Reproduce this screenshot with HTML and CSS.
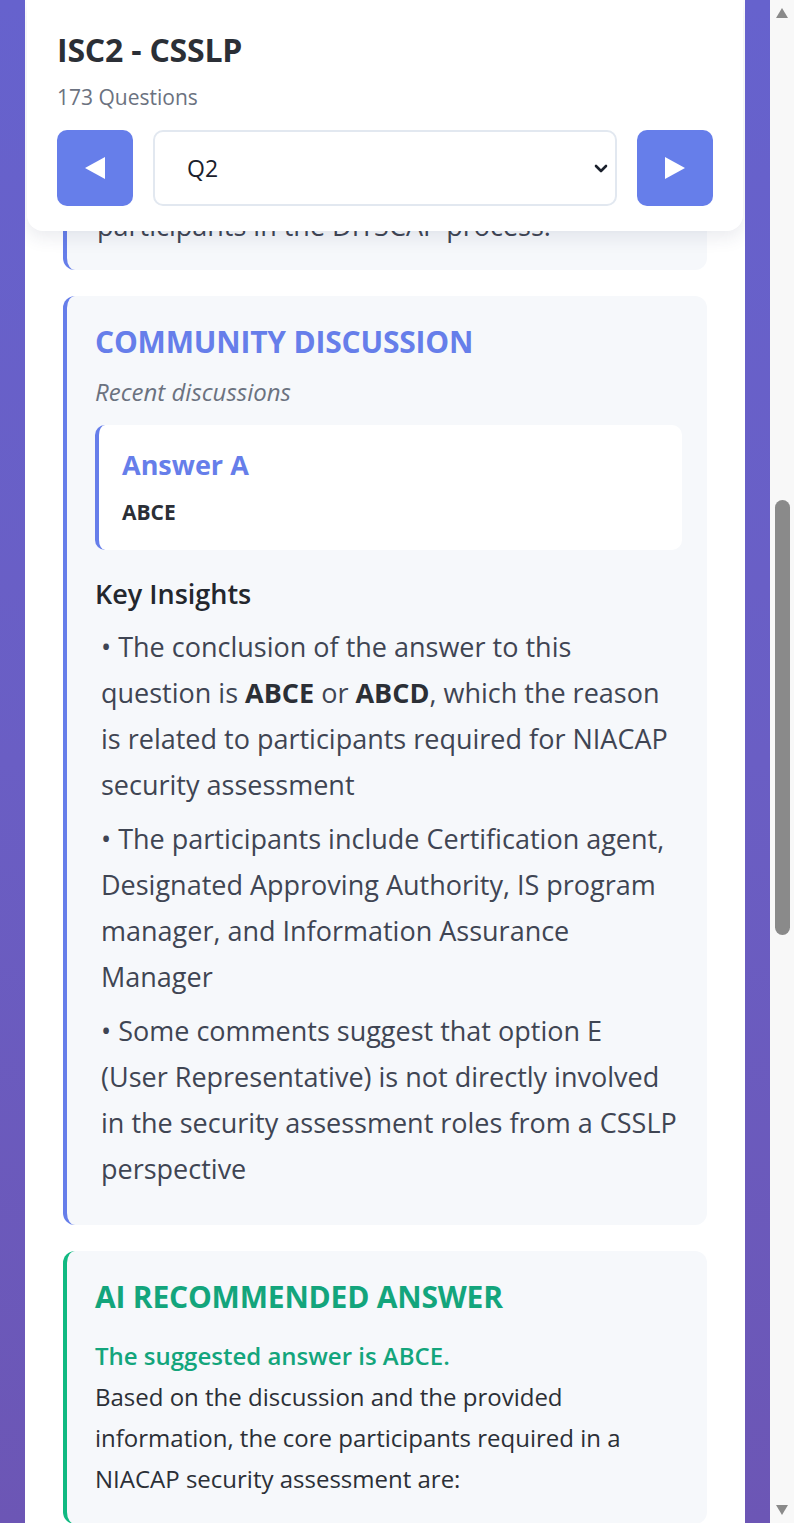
FILE: index.html
```html
<!DOCTYPE html>
<html lang="en">
<head>
<meta charset="utf-8">
<title>ISC2 - CSSLP</title>
<link rel="stylesheet" href="styles.css">
</head>
<body>
<div class="page">
  <div class="container">
    <header class="topbar">
      <h1 class="exam-title">ISC2 - CSSLP</h1>
      <div class="exam-count">173 Questions</div>
      <nav class="nav-row">
        <button class="nav-btn" aria-label="Previous question">
          <svg width="24" height="24" viewBox="0 0 24 24"><polygon points="22,1 22,23 2,12" fill="#fff"/></svg>
        </button>
        <div class="select-wrap">
          <select class="q-select">
            <option>Q2</option>
          </select>
          <svg class="chevron" width="14" height="9" viewBox="0 0 14 9"><polyline points="2,2 7,7 12,2" fill="none" stroke="#1a202c" stroke-width="2.6" stroke-linecap="round" stroke-linejoin="round"/></svg>
        </div>
        <button class="nav-btn" aria-label="Next question">
          <svg width="24" height="24" viewBox="0 0 24 24"><polygon points="2,1 2,23 22,12" fill="#fff"/></svg>
        </button>
      </nav>
    </header>

    <main class="content">
      <section class="card card-prev">
        <p class="prev-text">participants in the DITSCAP process.</p>
      </section>

      <section class="card">
        <h2 class="sec-title">COMMUNITY DISCUSSION</h2>
        <div class="sec-sub">Recent discussions</div>
        <div class="answer-box">
          <div class="answer-label">Answer A</div>
          <div class="answer-value">ABCE</div>
        </div>
        <h3 class="insights-title">Key Insights</h3>
        <div class="insights">
          <p>• The conclusion of the answer to this<br>question is <strong>ABCE</strong> or <strong>ABCD</strong>, which the reason<br>is related to participants required for NIACAP<br>security assessment</p>
          <p>• The participants include Certification agent,<br>Designated Approving Authority, IS program<br>manager, and Information Assurance<br>Manager</p>
          <p>• Some comments suggest that option E<br>(User Representative) is not directly involved<br>in the security assessment roles from a CSSLP<br>perspective</p>
        </div>
      </section>

      <section class="card card-ai">
        <h2 class="sec-title sec-title-ai">AI RECOMMENDED ANSWER</h2>
        <p class="ai-text"><span class="ai-answer">The suggested answer is ABCE.</span><br>Based on the discussion and the provided<br>information, the core participants required in a<br>NIACAP security assessment are:</p>
      </section>
    </main>
  </div>
</div>
<div class="scrollbar">
  <div class="sb-arrow sb-up"></div>
  <div class="sb-track"><div class="sb-thumb"></div></div>
  <div class="sb-arrow sb-down"></div>
</div>
</body>
</html>
```
FILE: styles.css
```css
* { box-sizing: border-box; }

html, body {
  margin: 0;
  padding: 0;
  height: 1523px;
  overflow: hidden;
}

body {
  display: flex;
  font-family: "Open Sans", "Noto Sans", "DejaVu Sans", sans-serif;
  color: #3f4553;
}

.page {
  flex: 1;
  height: 1523px;
  padding: 0 25px;
  background: linear-gradient(180deg, #6662cd 0%, #6a5ec4 50%, #6c56b5 100%);
}

.container {
  position: relative;
  height: 100%;
  background: #ffffff;
  overflow: hidden;
}

/* sticky header overlaying the scrolled content */
.topbar {
  position: absolute;
  top: 0;
  left: 2px;
  right: 2px;
  z-index: 5;
  background: #ffffff;
  border-radius: 0 0 16px 16px;
  box-shadow: 0 6px 18px rgba(40, 50, 90, 0.10);
  padding: 32px 30px 25px;
}

.exam-title {
  margin: 0;
  font-size: 32px;
  line-height: 35px;
  font-weight: 700;
  color: #2b2f36;
  letter-spacing: -0.2px;
}

.exam-count {
  margin-top: 15px;
  font-size: 21px;
  line-height: 30px;
  color: #6b7280;
}

.nav-row {
  display: flex;
  gap: 20px;
  margin-top: 18px;
}

.nav-btn {
  width: 76px;
  height: 76px;
  flex: none;
  border: none;
  border-radius: 10px;
  background: #667eea;
  display: flex;
  align-items: center;
  justify-content: center;
  padding: 0;
}

.select-wrap {
  position: relative;
  flex: 1;
}

.q-select {
  width: 100%;
  height: 76px;
  appearance: none;
  -webkit-appearance: none;
  background: #ffffff;
  border: 2px solid #e2e8f0;
  border-radius: 10px;
  padding: 0 40px 0 32px;
  font-family: "Open Sans", "Noto Sans", sans-serif;
  font-size: 23px;
  color: #1a202c;
}

.chevron {
  position: absolute;
  right: 9px;
  top: 34px;
  pointer-events: none;
}

/* content */
.content {
  padding: 203px 38px 0;
}

.card {
  background: #f6f8fb;
  border-left: 4px solid #667eea;
  border-radius: 12px;
  padding: 29px 25px 25px 28px;
  margin-bottom: 26px;
}

.card-prev {
  padding-top: 0;
  padding-bottom: 21px;
}

.prev-text {
  margin: 0;
  font-size: 27px;
  line-height: 46px;
  padding-left: 2px;
  white-space: nowrap;
}

.sec-title {
  margin: 0;
  font-size: 30px;
  line-height: 34px;
  font-weight: 700;
  color: #667eea;
  letter-spacing: -0.2px;
}

.sec-sub {
  margin-top: 16px;
  font-size: 24px;
  line-height: 33px;
  font-style: italic;
  color: #6b7280;
}

.answer-box {
  margin-top: 17px;
  background: #ffffff;
  border-left: 4px solid #667eea;
  border-radius: 10px;
  padding: 24px 23px 22px 23px;
}

.answer-label {
  font-size: 27px;
  line-height: 32px;
  font-weight: 700;
  color: #667eea;
}

.answer-value {
  margin-top: 16px;
  font-size: 21px;
  line-height: 31px;
  font-weight: 700;
  color: #2b2f36;
}

.insights-title {
  margin: 28px 0 0;
  font-size: 27px;
  line-height: 32px;
  font-weight: 600;
  color: #23272e;
}

.insights {
  margin-top: 14px;
}

.insights p {
  margin: 0 0 8px;
  padding-left: 6px;
  font-size: 27px;
  line-height: 46px;
  color: #3f4553;
  white-space: nowrap;
}

.insights strong {
  color: #2b2f36;
  font-weight: 700;
}

.card-ai {
  border-left-color: #10b981;
}

.sec-title-ai {
  color: #13a57c;
}

.ai-text {
  margin: 21px 0 0;
  font-size: 24px;
  line-height: 41px;
  color: #2b2f36;
  white-space: nowrap;
}

.ai-answer {
  font-weight: 600;
  color: #13a57c;
}

/* scrollbar column */
.scrollbar {
  width: 24px;
  flex: none;
  height: 1523px;
  background: #f8f8f8;
  display: flex;
  flex-direction: column;
  align-items: center;
}

.sb-arrow {
  width: 0;
  height: 0;
  border-left: 6px solid transparent;
  border-right: 6px solid transparent;
}

.sb-up {
  margin-top: 8px;
  border-bottom: 10px solid #8a8a8a;
}

.sb-down {
  margin-bottom: 8px;
  border-top: 10px solid #8a8a8a;
}

.sb-track {
  flex: 1;
  width: 100%;
  display: flex;
  justify-content: center;
}

.sb-thumb {
  margin-top: 482px;
  width: 15px;
  height: 435px;
  border-radius: 8px;
  background: #8a8a8a;
}
```
